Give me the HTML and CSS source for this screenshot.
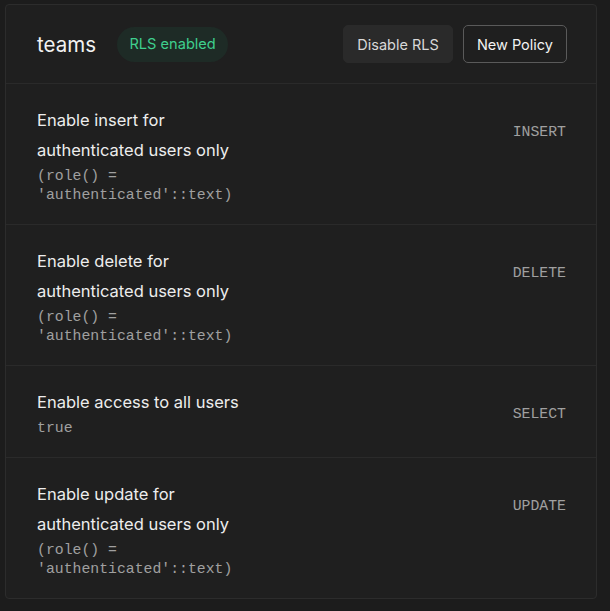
FILE: index.html
```html
<!DOCTYPE html>
<html>
<head>
<meta charset="utf-8">
<link rel="stylesheet" href="styles.css">
</head>
<body>
<div class="card">
  <div class="header">
    <div class="title-group">
      <span class="table-name">teams</span>
      <span class="badge">RLS enabled</span>
    </div>
    <div class="actions">
      <button class="btn btn-muted">Disable RLS</button>
      <button class="btn btn-outline">New Policy</button>
    </div>
  </div>
  <div class="row">
    <div class="info">
      <div class="policy-name">Enable insert for authenticated users only</div>
      <div class="policy-def">(role() = 'authenticated'::text)</div>
    </div>
    <div class="cmd">INSERT</div>
  </div>
  <div class="row">
    <div class="info">
      <div class="policy-name">Enable delete for authenticated users only</div>
      <div class="policy-def">(role() = 'authenticated'::text)</div>
    </div>
    <div class="cmd">DELETE</div>
  </div>
  <div class="row">
    <div class="info">
      <div class="policy-name">Enable access to all users</div>
      <div class="policy-def">true</div>
    </div>
    <div class="cmd">SELECT</div>
  </div>
  <div class="row">
    <div class="info">
      <div class="policy-name">Enable update for authenticated users only</div>
      <div class="policy-def">(role() = 'authenticated'::text)</div>
    </div>
    <div class="cmd">UPDATE</div>
  </div>
</div>
</body>
</html>
```
FILE: styles.css
```css
html, body {
  margin: 0;
  padding: 0;
  background: #1c1c1c;
}
body {
  padding: 4px 0 0 5px;
  font-family: Inter, "Noto Sans", sans-serif;
  color: #ededed;
}
.card {
  width: 592px;
  box-sizing: border-box;
  background: #1f1f1f;
  border: 1px solid #2c2c2c;
  border-radius: 4px;
}
.header {
  height: 78px;
  display: flex;
  align-items: center;
  justify-content: space-between;
  padding: 0 29px 0 31px;
  border-bottom: 1px solid #2a2a2a;
}
.title-group {
  display: flex;
  align-items: center;
  gap: 21px;
}
.table-name {
  font-size: 20.5px;
  color: #f2f2f2;
}
.badge {
  height: 35px;
  display: inline-flex;
  align-items: center;
  padding: 0 12.5px;
  border-radius: 18px;
  background: #1e2b26;
  color: #3ecf8e;
  font-size: 14.6px;
}
.actions {
  display: flex;
  gap: 10px;
}
.btn {
  height: 38px;
  padding: 0 13px;
  font-family: inherit;
  font-size: 14.5px;
  border-radius: 5px;
  cursor: pointer;
}
.btn-muted {
  background: #2a2a2a;
  border: 1px solid #2a2a2a;
  color: #d8d8d8;
}
.btn-outline {
  background: #1f1f1f;
  border: 1px solid #5a5a5a;
  color: #f2f2f2;
}
.row {
  display: flex;
  justify-content: space-between;
  align-items: flex-start;
  padding: 21px 30px 19px 31px;
  border-bottom: 1px solid #2a2a2a;
}
.row:last-child {
  border-bottom: none;
}
.info {
  width: 215px;
}
.policy-name {
  font-size: 16.5px;
  line-height: 30px;
  color: #ededed;
}
.policy-def {
  padding-top: 2px;
  font-family: "Liberation Mono", monospace;
  font-size: 14.8px;
  line-height: 19px;
  color: #a0a0a0;
}
.cmd {
  margin-top: 17px;
  font-family: "Liberation Mono", monospace;
  font-size: 14.8px;
  line-height: 20px;
  color: #a0a0a0;
}
```
